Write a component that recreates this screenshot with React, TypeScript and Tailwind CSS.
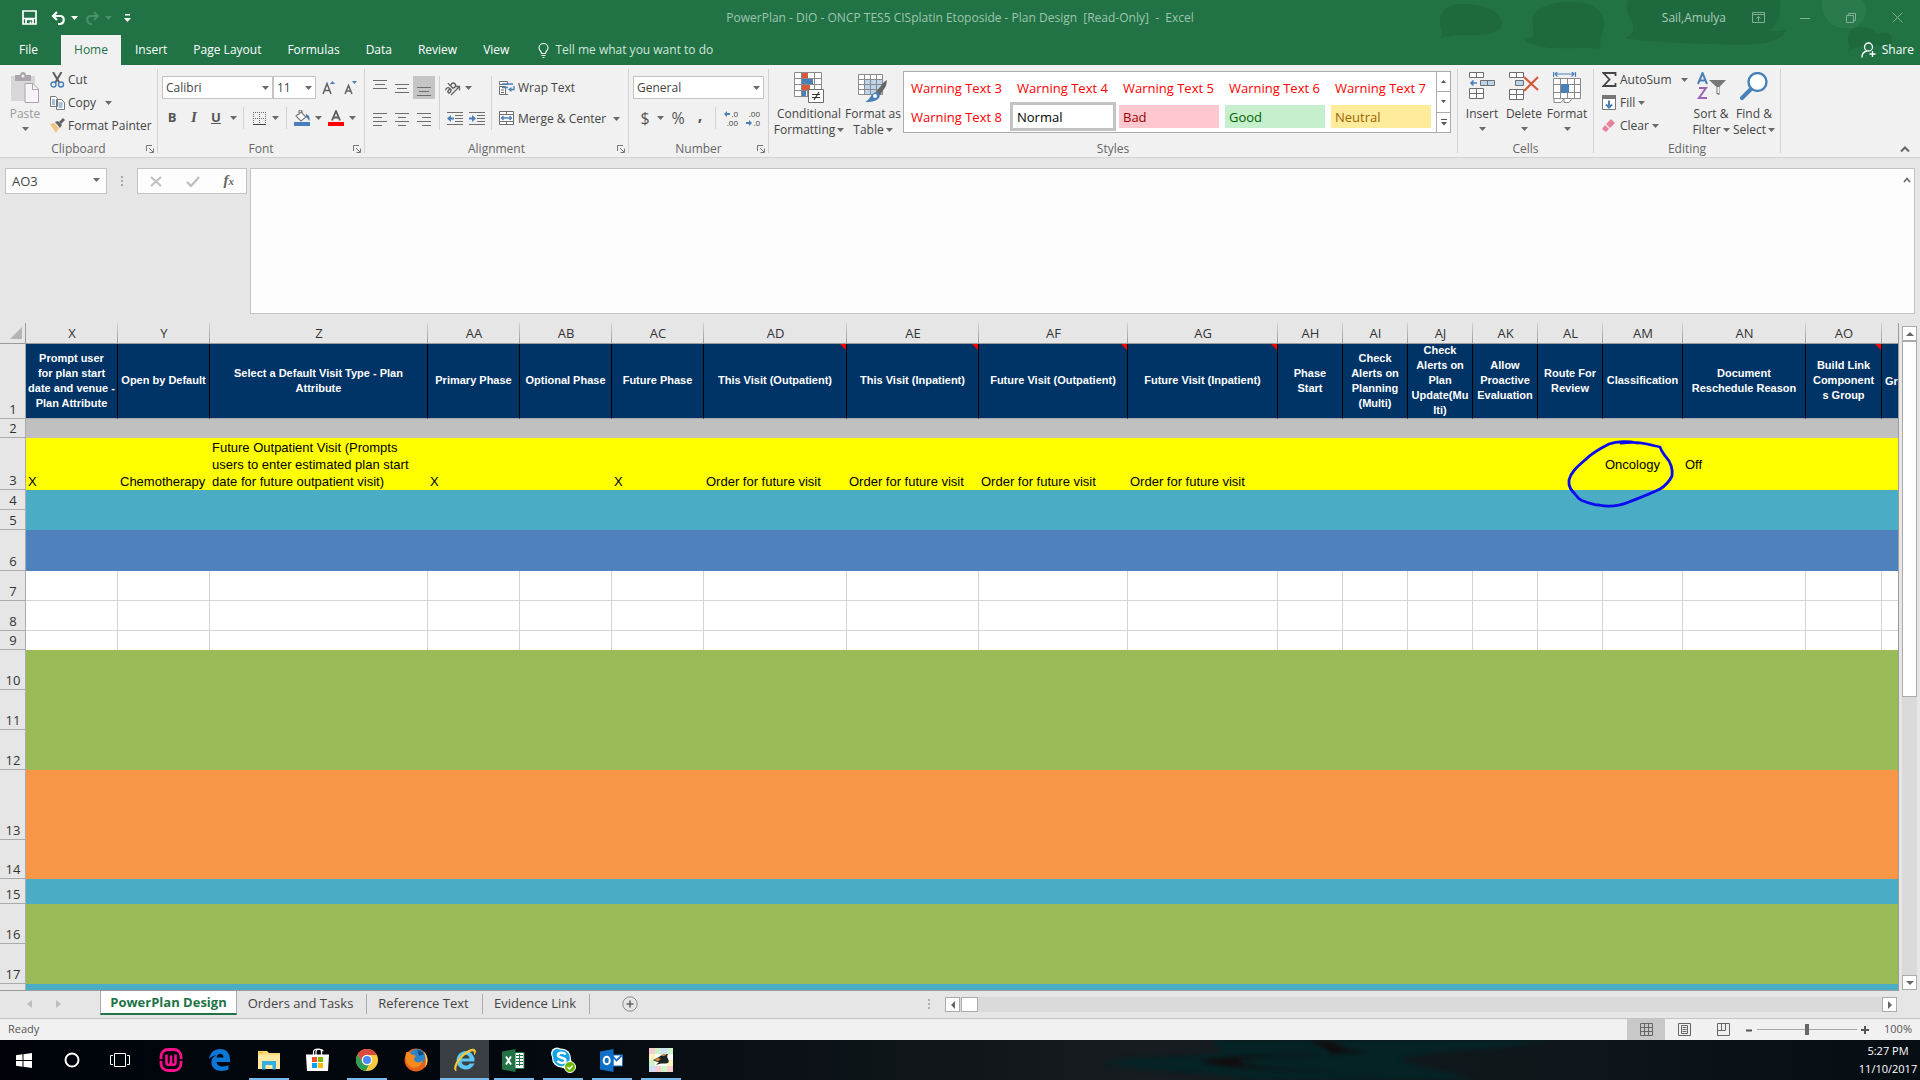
import type { ReactNode } from "react";

const GRAY = "#6e6e6e";
const BLUE = "#4a80b8";

function Caret({ className = "text-[#6a6a6a]" }: { className?: string }) {
  return (
    <svg width="7" height="4" viewBox="0 0 7 4" className={`shrink-0 ${className}`} aria-hidden="true">
      <path d="M0 0h7L3.5 4z" fill="currentColor" />
    </svg>
  );
}

/* ---------- title bar ---------- */

function TitleArt() {
  return (
    <svg className="pointer-events-none absolute right-0 top-0" width="500" height="54" viewBox="0 0 500 54" aria-hidden="true">
      <g fill="#1f693f">
        <path d="M20 22C20 8 32 3 46 4c18 1 34 6 36 18 1 10-12 12-22 13-14 1-26-2-40 4 5-6 0-10 0-17z" />
        <path d="M112 20c2-14 22-19 44-18 18 1 28 10 28 22 0 10-6 14-3 25-20-3-44 2-62-3-12-2-14-6-15-8 12 2 10-4 8-18z" />
        <path d="M208 0h152c2 20-6 26-10 31 6 1 12-1 16-1-4 12-24 15-44 15-30-1-90-2-117-7 10-4 10-12 5-20-4-7-4-12-2-18z" />
        <path d="M428 38c0-8 8-12 16-11 8 1 10 5 14 7 4-2 12-3 14 4 2 8-6 8-14 8-12-2-22 0-30 6 2-6 0-8 0-14z" />
      </g>
      <path d="M402 0h40c8 8 4 22-8 28-18 2-34-6-32-28z" fill="#2a7a4d" />
    </svg>
  );
}

function TitleBar() {
  return (
    <header className="relative z-10 flex h-[35px] shrink-0 items-center bg-[#217346] text-xs">
      <TitleArt />
      <div className="flex items-center pl-[22px]">
        <button aria-label="Save" className="mr-[14px]">
          <svg width="15" height="15" viewBox="0 0 15 15"><path d="M1 1h13v13H1zM1 8.500h13M4 14v-4.500h7V14M8.500 11.500v2" fill="none" stroke="#fff" strokeWidth="1.700" /></svg>
        </button>
        <button aria-label="Undo" className="flex items-center gap-[5px] text-white">
          <svg width="15" height="14" viewBox="0 0 15 14"><path d="M6 1 2 5l4 4M2 5h7c5 0 5 7 0 8H7" fill="none" stroke="#fff" strokeWidth="2.200" /></svg>
          <Caret className="text-white" />
        </button>
        <button aria-label="Redo" className="ml-[7px] flex items-center gap-[5px]">
          <svg width="15" height="14" viewBox="0 0 15 14"><path d="m9 1 4 4-4 4M13 5H6C1 5 1 12 6 13h1" fill="none" stroke="#4d8f6b" strokeWidth="2" /></svg>
          <Caret className="text-[#4d8f6b]" />
        </button>
        <button aria-label="Customize Quick Access Toolbar" className="ml-[12px]">
          <svg width="7" height="8" viewBox="0 0 7 8"><path d="M1 0h5v1.500H1zM0 4h7L3.500 8z" fill="#fff" /></svg>
        </button>
      </div>
      <h1 className="pointer-events-none absolute inset-x-0 text-center whitespace-pre text-[#9fc5ae]">PowerPlan - DIO - ONCP TES5 CISplatin Etoposide - Plan Design  [Read-Only]  -  Excel</h1>
      <div className="relative ml-auto flex items-center pr-[17px] text-[#a9ccb7]">
        <span className="mr-[26px]">Sail,Amulya</span>
        <button aria-label="Ribbon Display Options" className="mr-[35px]">
          <svg width="13" height="11" viewBox="0 0 13 11"><path d="M.5.5h12v10H.5zM.5 2.500h12M6.500 9.500v-5M4.500 6.500l2-2 2 2" fill="none" stroke="#7fb096" /></svg>
        </button>
        <button aria-label="Minimize" className="mr-[36px]">
          <svg width="10" height="10" viewBox="0 0 10 10"><path d="M0 5.500h10" stroke="#7fb096" /></svg>
        </button>
        <button aria-label="Restore" className="mr-[36px]">
          <svg width="10" height="10" viewBox="0 0 10 10"><path d="M.5 2.500h7v7h-7zM2.500 2.500v-2h7v7h-2" fill="none" stroke="#7fb096" /></svg>
        </button>
        <button aria-label="Close">
          <svg width="11" height="11" viewBox="0 0 11 11"><path d="m.5.5 10 10m0-10-10 10" stroke="#7fb096" /></svg>
        </button>
      </div>
    </header>
  );
}

const TABS = ["Insert", "Page Layout", "Formulas", "Data", "Review", "View"];

function RibbonTabs() {
  return (
    <nav className="flex h-[30px] shrink-0 items-stretch bg-[#217346] text-xs text-white">
      <button className="w-[61px] pr-1">File</button>
      <button className="w-[60px] bg-[#f1f1f1] text-[#217346]">Home</button>
      <div className="flex pl-px">
        {TABS.map((t) => (
          <button key={t} className="px-[13px]">{t}</button>
        ))}
      </div>
      <button className="ml-[16px] flex items-center gap-[6px] text-[#d3e5da]">
        <svg width="11" height="15" viewBox="0 0 11 15"><path d="M3.500 10.500C3.500 8 1 7.500 1 5a4.500 4.500 0 0 1 9 0c0 2.500-2.500 3-2.500 5.500zM3.500 12.500h4M4.500 14.500h2" fill="none" stroke="#e3efe8" strokeWidth="1.200" /></svg>
        Tell me what you want to do
      </button>
      <button className="z-20 ml-auto flex items-center gap-[6px] pr-[6px]">
        <svg width="15" height="16" viewBox="0 0 15 16"><circle cx="7.500" cy="5" r="4" fill="none" stroke="#fff" strokeWidth="1.300" /><path d="M1 15.500c0-4 2-6 5-6.500M11.500 9v6M8.500 12h6" fill="none" stroke="#fff" strokeWidth="1.300" /></svg>
        Share
      </button>
    </nav>
  );
}

/* ---------- ribbon ---------- */

function Group({ label, width, launcher, children }: { label: string; width: string; launcher?: boolean; children: ReactNode }) {
  return (
    <section aria-label={label} className={`flex shrink-0 ${width}`}>
      <div className="flex min-w-0 flex-1 flex-col">
        <div className="flex h-[76px] items-start">{children}</div>
        <div className="relative flex h-4 items-center justify-center text-[#666]">
          {label}
          {launcher && (
            <button aria-label={`${label} settings`} className="absolute right-[3px]">
              <svg width="8" height="8" viewBox="0 0 8 8"><path d="M.5 6V.5H6M3 3l4 4M7.500 3.500v4h-4" fill="none" stroke="#777" /></svg>
            </button>
          )}
        </div>
      </div>
      <div className="mt-1 h-[84px] w-px bg-[#d2d2d2]" />
    </section>
  );
}

function Big({ icon, lines, width, caret = "below" }: { icon: ReactNode; lines: string[]; width: string; caret?: "below" | "inline" }) {
  return (
    <button className={`flex shrink-0 flex-col items-center pt-[7px] leading-4 ${width}`}>
      <span className="flex h-[34px] items-start">{icon}</span>
      {lines.map((l, i) => (
        <span key={l} className="flex items-center gap-[2px] whitespace-nowrap">
          {l}
          {caret === "inline" && i === lines.length - 1 && <Caret />}
        </span>
      ))}
      {caret === "below" && <Caret className="mt-[5px] text-[#6a6a6a]" />}
    </button>
  );
}

function Small({ icon, label, caret }: { icon: ReactNode; label: string; caret?: string }) {
  return (
    <button className="flex h-[23px] items-center gap-[3px] whitespace-nowrap">
      {icon}
      <span>{label}</span>
      {caret && <span className={caret}><Caret /></span>}
    </button>
  );
}

function Lines({ rows, label, active }: { rows: [number, number, number][]; label: string; active?: boolean }) {
  return (
    <button aria-label={label} aria-pressed={active} className={`flex h-[23px] w-[22px] items-center justify-center ${active ? "bg-[#c5c5c5]" : ""}`}>
      <svg width="14" height="17" viewBox="0 0 14 17">
        {rows.map(([x1, x2, y]) => <path key={y} d={`M${x1} ${y}.5H${x2}`} stroke={GRAY} />)}
      </svg>
    </button>
  );
}

function Sep({ tall = "h-[22px]" }: { tall?: string }) {
  return <div className={`w-px bg-[#d2d2d2] ${tall}`} />;
}

function Combo({ label, value, width }: { label: string; value: string; width: string }) {
  return (
    <div className={`relative h-[23px] ${width}`}>
      <select aria-label={label} defaultValue={value} className="h-full w-full appearance-none border border-[#c3c3c3] bg-white pl-[3px] text-xs text-[#444] outline-none">
        <option>{value}</option>
      </select>
      <span className="pointer-events-none absolute right-[4px] top-[10px]"><Caret /></span>
    </div>
  );
}

function Clipboard() {
  return (
    <Group label="Clipboard" width="w-[158px]" launcher>
      <div className="w-[50px] text-[#9c9c9c]">
        <Big
          width="w-[50px]"
          lines={["Paste"]}
          icon={
            <svg width="30" height="32" viewBox="0 0 30 32"><path d="M1 4h24v25H1z" fill="#d9d5da" /><path d="M5 3h5c0-4 6-4 6 0h5v6H5z" fill="#aaa6ab" /><circle cx="13" cy="4" r="1.500" fill="#f1f1f1" /><path d="M15 11.500h8l5.500 5.500v13.500H15z" fill="#f8f3f8" stroke="#a9a5aa" /><path d="M22.500 12v5.500H28" fill="none" stroke="#a9a5aa" /></svg>
          }
        />
      </div>
      <div className="flex flex-col pt-[3px]">
        <Small label="Cut" icon={<svg width="15" height="16" viewBox="0 0 15 16"><path d="m3 0 6.500 11M11.500 0 5 11" stroke="#606060" strokeWidth="2" /><circle cx="3.500" cy="12.500" r="2.500" fill="none" stroke={BLUE} strokeWidth="1.400" /><circle cx="11" cy="12.500" r="2.500" fill="none" stroke={BLUE} strokeWidth="1.400" /></svg>} />
        <Small label="Copy" caret="ml-[6px]" icon={<svg width="15" height="14" viewBox="0 0 15 14"><path d="M.5.5h5l2 2v8h-7zM6.500 3.500h5l3 3v7h-8z" fill="#fff" stroke="#777" /><path d="M2 4h3M2 6h3M2 8h3M8.500 7h4M8.500 9h4M8.500 11h4" stroke={BLUE} /></svg>} />
        <Small label="Format Painter" icon={<svg width="15" height="15" viewBox="0 0 15 15"><path d="m0 6 4-1 5 5-3 5z" fill="#f0c47c" /><path d="m5 4 3-1 4 4-2 3z" fill="#606060" /><path d="m9 4 4-4 2 2-4 4z" fill="#606060" /></svg>} />
      </div>
    </Group>
  );
}

function FontGroup() {
  return (
    <Group label="Font" width="w-[207px]" launcher>
      <div className="flex flex-col pl-[4px] pt-[11px]">
        <div className="flex items-center">
          <Combo label="Font name" value="Calibri" width="w-[111px]" />
          <Combo label="Font size" value="11" width="w-[43px]" />
          <button aria-label="Increase font size" className="ml-[6px]">
            <svg width="14" height="16" viewBox="0 0 14 16"><path d="m1 14 4-10.500L9 14M2.500 10.500h5" fill="none" stroke="#606060" strokeWidth="1.500" /><path d="M8 4h5l-2.500-3z" fill={BLUE} /></svg>
          </button>
          <button aria-label="Decrease font size" className="ml-[8px]">
            <svg width="14" height="16" viewBox="0 0 14 16"><path d="m1 14 3.500-8.500L8 14M2.300 11h4.400" fill="none" stroke="#606060" strokeWidth="1.500" /><path d="M8 1h5l-2.500 3z" fill={BLUE} /></svg>
          </button>
        </div>
        <div className="mt-[8px] flex h-[22px] items-center text-[13px] text-[#555]">
          <button className="w-[20px] font-bold">B</button>
          <button className="w-[24px] font-['Liberation_Serif'] text-[15px] font-bold italic">I</button>
          <button className="w-[20px] font-bold underline">U</button>
          <button aria-label="Underline style" className="flex w-[14px] justify-center"><Caret /></button>
          <span className="ml-[3px]"><Sep /></span>
          <button aria-label="Borders" className="ml-[9px] flex items-center gap-[6px]">
            <svg width="13" height="13" viewBox="0 0 13 13"><path d="M0 .5h13M0 6.500h13M.5 0v13M6.500 0v13M12.500 0v13" stroke={GRAY} strokeDasharray="1 1" /><path d="M0 12.500h13" stroke="#444" /></svg>
            <Caret />
          </button>
          <span className="ml-[7px]"><Sep /></span>
          <button aria-label="Fill color" className="ml-[7px] flex items-center gap-[5px]">
            <svg width="16" height="16" viewBox="0 0 16 16"><path d="M0 12h16v4H0z" fill="#4a7ebb" /><path d="m2 6 5-4 5 5-5 4zM5 5V1c1-1.500 3-1 3 0v2" fill="#fff" stroke="#777" strokeWidth="1.100" /><path d="M12 4c3 1 4 3 3.500 7-1.500-1-1.500-3-3.500-4z" fill={BLUE} /></svg>
            <Caret />
          </button>
          <button aria-label="Font color" className="ml-[6px] flex items-center gap-[5px]">
            <svg width="16" height="16" viewBox="0 0 16 16"><path d="M0 12h16v4H0z" fill="#f00" /><path d="M4 10.500 8 1l4 9.500M5.500 7.500h5" fill="none" stroke="#606060" strokeWidth="1.900" /></svg>
            <Caret />
          </button>
        </div>
      </div>
    </Group>
  );
}

function AlignmentGroup() {
  const indent = (label: string, d: string) => (
    <button aria-label={label} className="flex w-[22px] justify-center">
      <svg width="17" height="13" viewBox="0 0 17 13"><path d="M0 .5h16M8 3.500h8M8 6.500h8M8 9.500h8M0 12.500h16" stroke={GRAY} /><path d={d} fill={BLUE} /></svg>
    </button>
  );
  return (
    <Group label="Alignment" width="w-[264px]" launcher>
      <div className="flex pl-[4px] pt-[11px]">
        <div>
          <div className="flex">
            <Lines label="Top align" rows={[[0, 14, 1], [2, 12, 5], [0, 14, 9]]} />
            <Lines label="Middle align" rows={[[0, 14, 5], [2, 12, 9], [0, 14, 13]]} />
            <Lines label="Bottom align" active rows={[[0, 14, 8], [2, 12, 12], [0, 14, 16]]} />
          </div>
          <div className="mt-[8px] flex">
            <Lines label="Align left" rows={[[0, 14, 3], [0, 9, 7], [0, 14, 11], [0, 9, 15]]} />
            <Lines label="Center" rows={[[0, 14, 3], [3, 11, 7], [0, 14, 11], [3, 11, 15]]} />
            <Lines label="Align right" rows={[[0, 14, 3], [5, 14, 7], [0, 14, 11], [5, 14, 15]]} />
          </div>
        </div>
        <div className="ml-[4px]"><Sep tall="h-[54px]" /></div>
        <div className="w-[51px] pl-[4px]">
          <button aria-label="Orientation" className="flex h-[23px] items-center gap-[3px]">
            <svg width="18" height="17" viewBox="0 0 18 17"><g fill="none" stroke="#5a5a5a" strokeWidth="1.300" transform="rotate(-45 7 8)"><path d="M1 6.500c1-1 4-1 4 1V11M5 8.500c-2 0-4 0-4 1.500s3 1.500 4 0M7.500 3v8M7.500 8c0-2.500 4.500-2.500 4.500.5s-4.500 3-4.500.5" /></g><path d="m7 16 8-8M11.500 7.500h4V11.500" fill="none" stroke="#666" strokeWidth="1.300" /></svg>
            <Caret />
          </button>
          <div className="mt-[8px] flex h-[22px] items-center">
            {indent("Decrease indent", "M0 6.500 4 3v2.500h3v2H4V10z")}
            {indent("Increase indent", "M7 6.500 3 3v2.500H0v2h3V10z")}
          </div>
        </div>
        <Sep tall="h-[54px]" />
        <div className="pl-[7px]">
          <Small label="Wrap Text" icon={<svg width="16" height="16" viewBox="0 0 16 16"><path d="M.5 1.500h8v3h-8zM.5 6.500h6v8h-6z" fill="#fff" stroke={GRAY} /><path d="M2 10h3M2 12.500h3M6.500 14.500H9" stroke={GRAY} /><path d="M3 4h11M3 7.500h6M15 6v3.500h-3" fill="none" stroke={BLUE} strokeWidth="1.300" /><path d="M9 9.500 12.500 7v5z" fill={BLUE} /></svg>} />
          <div className="mt-[8px]">
            <Small label="Merge & Center" caret="ml-[4px]" icon={<svg width="16" height="15" viewBox="0 0 16 15"><path d="M.5.5h14v13H.5zM.5 3.500h14M.5 10.500h14M7.500.5v3M7.500 10.500v3" fill="#fff" stroke={GRAY} /><path d="M2 7h11M4.500 5 2.500 7l2 2M10.500 5l2 2-2 2" fill="none" stroke={BLUE} strokeWidth="1.300" /></svg>} />
          </div>
        </div>
      </div>
    </Group>
  );
}

function DecimalIcon({ label, top, bottom, arrow }: { label: string; top: string; bottom: string; arrow: "up" | "down" }) {
  const a = <svg width="6" height="6" viewBox="0 0 6 6">{arrow === "up" ? <path d="M0 3 3 0v2h3v2H3v2z" fill={BLUE} /> : <path d="M6 3 3 0v2H0v2h3v2z" fill={BLUE} />}</svg>;
  return (
    <button aria-label={label} className="flex w-[16px] flex-col items-end text-[8px] leading-[9px] text-[#444]">
      <span className="flex items-center gap-px">{arrow === "up" && a}{top}</span>
      <span className="flex items-center gap-px">{arrow === "down" && a}{bottom}</span>
    </button>
  );
}

function NumberGroup() {
  return (
    <Group label="Number" width="w-[140px]" launcher>
      <div className="flex flex-col pl-[4px] pt-[11px]">
        <Combo label="Number format" value="General" width="w-[131px]" />
        <div className="mt-[8px] flex h-[22px] items-center text-base text-[#555]">
          <button className="w-[24px]">$</button>
          <Caret />
          <button className="ml-[6px] w-[16px]">%</button>
          <button className="ml-[8px] w-[12px] pb-[6px] font-bold">,</button>
          <span className="ml-[9px]"><Sep /></span>
          <div className="flex gap-[6px] pl-[6px]">
            <DecimalIcon label="Increase decimal" top=".0" bottom=".00" arrow="up" />
            <DecimalIcon label="Decrease decimal" top=".00" bottom=".0" arrow="down" />
          </div>
        </div>
      </div>
    </Group>
  );
}

const STYLES: [string, string][] = [
  ["Warning Text 3", "text-[#ff0000] border-transparent"],
  ["Warning Text 4", "text-[#ff0000] border-transparent"],
  ["Warning Text 5", "text-[#ff0000] border-transparent"],
  ["Warning Text 6", "text-[#ff0000] border-transparent"],
  ["Warning Text 7", "text-[#ff0000] border-transparent"],
  ["Warning Text 8", "text-[#ff0000] border-transparent"],
  ["Normal", "text-black border-[#c3c3c3]"],
  ["Bad", "text-[#9c0006] bg-[#ffc7ce] border-white"],
  ["Good", "text-[#006100] bg-[#c6efce] border-white"],
  ["Neutral", "text-[#9c6500] bg-[#ffeb9c] border-white"],
];

function StylesGroup() {
  return (
    <Group label="Styles" width="w-[689px]">
      <div className="pl-[4px]">
        <Big width="w-[72px]" caret="inline" lines={["Conditional", "Formatting"]} icon={
          <svg width="30" height="31" viewBox="0 0 30 31"><path d="M.5.5h27v24H.5zM.5 6.500h27M.5 12.500h27M.5 18.500h27M7.500.5v24M13.500.5v24M20.500.5v24" fill="#fff" stroke="#8a8a8a" /><path d="M8 1h6v5H8zM8 13h8v5H8z" fill="#d9593b" /><path d="M8 7h11v5H8zM8 19h4v5H8z" fill={BLUE} /><path d="M14.500 17.500h15v13h-15z" fill="#fff" stroke={GRAY} /><path d="M18 22.500h8M18 25.500h8M25 20l-5 8" stroke="#333" strokeWidth="1.200" /></svg>
        } />
      </div>
      <Big width="w-[56px]" caret="inline" lines={["Format as", "Table"]} icon={
        <svg width="30" height="31" viewBox="0 0 30 31"><path d="M.5 2.500h24v20H.5z" fill="#fff" /><path d="M7 8h18v15H7z" fill="#bdd3ea" /><path d="M.5 2.500h24v20H.5zM.5 7.500h24M.5 12.500h24M.5 17.500h24M6.500 2.500v20M12.500 2.500v20M18.500 2.500v20" fill="none" stroke="#8a8a8a" /><path d="m29 8-3 2-8 10 4 3 6-9z" fill="#666" /><path d="M18 20c3 0 5 3 3 6-3 4-9 4-14 4 5-2 6-9 11-10z" fill={BLUE} /><circle cx="17" cy="24" r="2" fill="#fff" /></svg>
      } />
      <div className="ml-[2px] mt-[6px] flex h-[62px] border border-[#ababab] bg-white">
        <div className="grid grid-cols-5 content-start pr-[2px] pt-px">
          {STYLES.map(([name, cls]) => (
            <button key={name} className={`h-[29px] w-[106px] border-[3px] px-[4px] text-left text-[13px] leading-[20px] whitespace-nowrap ${cls}`}>{name}</button>
          ))}
        </div>
        <div className="flex w-[14px] flex-col border-l border-[#ababab]">
          <button aria-label="Previous styles" className="flex flex-1 items-center justify-center border-b border-[#ababab]"><svg width="5" height="3" viewBox="0 0 5 3"><path d="M0 3h5L2.500 0z" fill="#555" /></svg></button>
          <button aria-label="Next styles" className="flex flex-1 items-center justify-center border-b border-[#ababab]"><svg width="5" height="3" viewBox="0 0 5 3"><path d="M0 0h5L2.500 3z" fill="#555" /></svg></button>
          <button aria-label="More styles" className="flex flex-1 items-center justify-center"><svg width="6" height="7" viewBox="0 0 6 7"><path d="M0 0h6v1H0zM0 3h6L3 6.500z" fill="#555" /></svg></button>
        </div>
      </div>
    </Group>
  );
}

function CellsGroup() {
  return (
    <Group label="Cells" width="w-[136px]">
      <div className="flex pl-[3px]">
        <Big width="w-[42px]" lines={["Insert"]} icon={<svg width="27" height="28" viewBox="0 0 27 28"><path d="M.5.5h14v5H.5zM7.500.5v5M.5 16.500h14v10H.5zM.5 21.500h14M7.500 16.500v10" fill="#fff" stroke={GRAY} /><path d="M11.500 8.500h14v5h-14zM18.500 8.500v5" fill="#bdd3ea" stroke={GRAY} /><path d="M8 11H2M4.500 8.500 2 11l2.500 2.500" fill="none" stroke={BLUE} strokeWidth="1.600" /></svg>} />
        <Big width="w-[42px]" lines={["Delete"]} icon={<svg width="30" height="28" viewBox="0 0 30 28"><path d="M.5.5h14v5H.5zM7.500.5v5M.5 17.500h14v10H.5zM.5 22.500h14M7.500 17.500v10" fill="#fff" stroke={GRAY} /><path d="M6.500 8.500h8v5h-8z" fill="#bdd3ea" stroke={GRAY} /><path d="m15 5 14 13M29 5 15 19" stroke="#d9593b" strokeWidth="2.200" /></svg>} />
        <Big width="w-[44px]" lines={["Format"]} icon={<svg width="28" height="32" viewBox="0 0 28 32"><path d="M.5-1v6M22.500-1v6M2 2h19M4.500-.5 2 2l2.500 2.500M18.500-.5 21 2l-2.500 2.500" fill="none" stroke={BLUE} strokeWidth="1.200" /><path d="M.5 6.500h27v20H.5zM.5 12.500h27M.5 20.500h27M7.500 6.500v20M14.500 6.500v20M21.500 6.500v20M1 26.500v4h7l3-4v4h5l3-4" fill="#fff" stroke="#8a8a8a" /><path d="M8 12h8v9H8z" fill={BLUE} /></svg>} />
      </div>
    </Group>
  );
}

function EditingGroup() {
  return (
    <Group label="Editing" width="w-[187px]">
      <div className="flex w-[96px] flex-col items-start pl-[8px] pt-[3px]">
        <Small label="AutoSum" caret="ml-[6px]" icon={<svg width="15" height="15" viewBox="0 0 15 15"><path d="M13.500 4V1H1.500l6 6.500-6 6.500h12v-3" fill="none" stroke="#444" strokeWidth="1.800" /></svg>} />
        <Small label="Fill" caret="ml-0" icon={<svg width="15" height="15" viewBox="0 0 15 15"><path d="M.5 1h13v13.500H.5z" fill="#fff" stroke="#777" /><path d="M0 0h14v4H0z" fill="#777" /><path d="M7 5.500v7M4 9.500l3 3 3-3" fill="none" stroke={BLUE} strokeWidth="2" /></svg>} />
        <Small label="Clear" caret="ml-0" icon={<svg width="15" height="13" viewBox="0 0 15 13"><path d="M9 0 13 4 8 9 4 5zM3 6l4 4-2.500 2.500H3L0 10z" fill="#e8829a" /></svg>} />
      </div>
      <Big width="w-[42px]" caret="inline" lines={["Sort &", "Filter"]} icon={
        <svg width="29" height="29" viewBox="0 0 29 29"><path d="M1 12 5.500 1 10 12M2.500 8.500h6" fill="none" stroke={BLUE} strokeWidth="2" /><path d="M2 16h7L2 26h8" fill="none" stroke="#9a63b8" strokeWidth="2" /><path d="M12 8h17l-6.500 7v8l-3-1v-7z" fill="#777" /><path d="M20.500 15h1.500v6h-1.500z" fill="#fff" /></svg>
      } />
      <Big width="w-[44px]" caret="inline" lines={["Find &", "Select"]} icon={
        <svg width="28" height="29" viewBox="0 0 28 29"><path d="m2 26 9-9" stroke={BLUE} strokeWidth="4" strokeLinecap="round" /><circle cx="17.500" cy="10" r="9" fill="#fff" stroke={BLUE} strokeWidth="2.400" /></svg>
      } />
    </Group>
  );
}

function Ribbon() {
  return (
    <div className="relative flex h-[93px] shrink-0 overflow-hidden border-b border-[#d2d2d2] bg-[#f1f1f1] text-xs text-[#444]">
      <Clipboard />
      <FontGroup />
      <AlignmentGroup />
      <NumberGroup />
      <StylesGroup />
      <CellsGroup />
      <EditingGroup />
      <button aria-label="Collapse the Ribbon" className="mr-[10px] ml-auto self-end pb-[5px]">
        <svg width="10" height="6" viewBox="0 0 10 6"><path d="m1 5.500 4-4 4 4" fill="none" stroke="#666" strokeWidth="2" /></svg>
      </button>
    </div>
  );
}

function FormulaBar() {
  return (
    <div className="flex h-[165px] shrink-0 items-start bg-[#e6e6e6] pl-[5px] pr-[5px] pt-[10px] text-[#444]">
      <div className="relative h-[26px] w-[102px]">
        <input aria-label="Name Box" defaultValue="AO3" className="h-full w-full border border-[#c3c3c3] bg-[#fdfdfd] pl-[6px] text-[13px] outline-none" />
        <span className="pointer-events-none absolute right-[7px] top-[10px]"><Caret /></span>
      </div>
      <svg width="30" height="26" viewBox="0 0 30 26" aria-hidden="true"><path d="M14 8h2v2h-2zM14 12h2v2h-2zM14 16h2v2h-2z" fill="#a8a8a8" /></svg>
      <div className="flex h-[26px] w-[110px] items-center justify-between border border-[#c3c3c3] bg-[#fdfdfd] pl-[12px] pr-[12px]">
        <button aria-label="Cancel"><svg width="12" height="11" viewBox="0 0 12 11"><path d="m1 1 10 9M11 1 1 10" stroke="#c0c0c0" strokeWidth="2" /></svg></button>
        <button aria-label="Enter"><svg width="14" height="11" viewBox="0 0 14 11"><path d="m1 6 4 4 8-9" fill="none" stroke="#c0c0c0" strokeWidth="2.400" /></svg></button>
        <button aria-label="Insert Function" className="pb-[2px] font-['Liberation_Serif'] text-[15px] font-bold italic leading-none text-[#666]">f<span className="text-[11px]">x</span></button>
      </div>
      <div className="relative ml-[3px] h-[146px] flex-1">
        <textarea aria-label="Formula Bar" className="block h-full w-full resize-none border border-[#c3c3c3] bg-[#fdfdfd] outline-none" />
        <svg className="absolute right-[4px] top-[9px]" width="8" height="6" viewBox="0 0 8 6"><path d="m1 5 3-3.500L7 5" fill="none" stroke="#666" strokeWidth="1.600" /></svg>
      </div>
    </div>
  );
}

/* ---------- worksheet ---------- */

type Col = { id: string; w: string; head: string; row3?: string; note?: boolean };

const COLS: Col[] = [
  { id: "X", w: "w-[92px]", head: "Prompt user\nfor plan start\ndate and venue -\nPlan Attribute", row3: "X" },
  { id: "Y", w: "w-[92px]", head: "Open by Default", row3: "Chemotherapy" },
  { id: "Z", w: "w-[218px]", head: "Select a Default Visit Type - Plan\nAttribute", row3: "Future Outpatient Visit (Prompts\nusers to enter estimated plan start\ndate for future outpatient visit)" },
  { id: "AA", w: "w-[92px]", head: "Primary Phase", row3: "X" },
  { id: "AB", w: "w-[92px]", head: "Optional Phase" },
  { id: "AC", w: "w-[92px]", head: "Future Phase", row3: "X" },
  { id: "AD", w: "w-[143px]", head: "This Visit (Outpatient)", row3: "Order for future visit", note: true },
  { id: "AE", w: "w-[132px]", head: "This Visit (Inpatient)", row3: "Order for future visit", note: true },
  { id: "AF", w: "w-[149px]", head: "Future Visit (Outpatient)", row3: "Order for future visit", note: true },
  { id: "AG", w: "w-[150px]", head: "Future Visit (Inpatient)", row3: "Order for future visit", note: true },
  { id: "AH", w: "w-[65px]", head: "Phase\nStart" },
  { id: "AI", w: "w-[65px]", head: "Check\nAlerts on\nPlanning\n(Multi)" },
  { id: "AJ", w: "w-[65px]", head: "Check\nAlerts on\nPlan\nUpdate(Mu\nlti)" },
  { id: "AK", w: "w-[65px]", head: "Allow\nProactive\nEvaluation" },
  { id: "AL", w: "w-[65px]", head: "Route For\nReview" },
  { id: "AM", w: "w-[80px]", head: "Classification", row3: "Oncology" },
  { id: "AN", w: "w-[123px]", head: "Document\nReschedule Reason", row3: "Off" },
  { id: "AO", w: "w-[76px]", head: "Build Link\nComponent\ns Group", note: true },
];

const FILL_ROWS: { n: number; h: string; bg: string; grid?: boolean }[] = [
  { n: 4, h: "h-[20px]", bg: "bg-[#4bacc6]" },
  { n: 5, h: "h-[20px]", bg: "bg-[#4bacc6]" },
  { n: 6, h: "h-[41px]", bg: "bg-[#4f81bd]" },
  { n: 7, h: "h-[30px]", bg: "bg-white", grid: true },
  { n: 8, h: "h-[30px]", bg: "bg-white", grid: true },
  { n: 9, h: "h-[19px]", bg: "bg-white", grid: true },
  { n: 10, h: "h-[40px]", bg: "bg-[#9bbb59]" },
  { n: 11, h: "h-[40px]", bg: "bg-[#9bbb59]" },
  { n: 12, h: "h-[40px]", bg: "bg-[#9bbb59]" },
  { n: 13, h: "h-[70px]", bg: "bg-[#f79646]" },
  { n: 14, h: "h-[39px]", bg: "bg-[#f79646]" },
  { n: 15, h: "h-[25px]", bg: "bg-[#4bacc6]" },
  { n: 16, h: "h-[40px]", bg: "bg-[#9bbb59]" },
  { n: 17, h: "h-[40px]", bg: "bg-[#9bbb59]" },
];

function RowHead({ n }: { n: number | string }) {
  return (
    <th scope="row" className="border-b border-r border-[#ababab] bg-[#e6e6e6] p-0 pl-px align-bottom font-['Open_Sans',sans-serif] text-[13px] font-normal leading-[17px] text-[#333]">{n}</th>
  );
}

function InkCircle() {
  return (
    <svg className="pointer-events-none absolute -left-[40px] top-0 z-10" width="120" height="72" viewBox="0 0 120 72" aria-hidden="true">
      <path d="M74 5C66 3 54 3 46 6 36 11 28 16 22 22c-8 7-14 12-16 20-1 7 3 11 6 14 2 3 4 5 6 6 5 2 12 5 18 5 8 2 20 1 30-3 10-4 21-8 31-13 5-3 9-7 12-13 1-6-1-14-6-19-3-4-5-6-6-10C93 8 88 7 84 6c-8-2-16-2-26-1" fill="none" stroke="#0a0af0" strokeWidth="2.800" strokeLinecap="round" strokeLinejoin="round" />
    </svg>
  );
}

function Sheet() {
  return (
    <div className="min-w-0 flex-1 overflow-hidden border-b border-r border-[#9b9b9b] bg-[#e6e6e6]">
      <table className="w-full table-fixed border-separate border-spacing-0">
        <thead>
          <tr className="h-[21px]">
            <th className="w-[26px] border-b border-r border-[#9b9b9b] p-0">
              <svg className="ml-auto mr-[3px]" width="12" height="12" viewBox="0 0 12 12" aria-label="Select all"><path d="M12 0v12H0z" fill="#b4b4b4" /></svg>
            </th>
            {COLS.map((c) => (
              <th key={c.id} scope="col" className={`border-b border-[#9b9b9b] bg-[linear-gradient(to_bottom,#d0d0d0,#9b9b9b)] bg-[length:1px_100%] bg-right bg-no-repeat p-0 text-[13px] font-normal leading-[18px] text-[#333] ${c.w}`}>{c.id}</th>
            ))}
            <th className="border-b border-[#9b9b9b] p-0" />
          </tr>
        </thead>
        <tbody>
          <tr className="h-[75px] font-['Liberation_Sans','Arial',sans-serif]">
            <RowHead n={1} />
            {COLS.map((c) => (
              <td key={c.id} className="relative border-b border-r border-b-[#ababab] border-r-black bg-[#003366] p-0 pb-px text-center text-[11px] font-bold leading-[15px] text-white">
                <div className="flex h-[73px] items-center justify-center overflow-hidden whitespace-pre">{c.head}</div>
                {c.note && <svg className="absolute right-0 top-0" width="6" height="6" viewBox="0 0 6 6"><path d="M0 0h6v6z" fill="#f00" /></svg>}
              </td>
            ))}
            <td className="overflow-hidden border-b border-[#ababab] bg-[#003366] p-0 pl-[3px] text-[11px] font-bold leading-[15px] whitespace-nowrap text-white">Group</td>
          </tr>
          <tr className="h-[19px]">
            <RowHead n={2} />
            <td colSpan={COLS.length + 1} className="bg-[#c0c0c0] p-0" />
          </tr>
          <tr className="h-[52px] font-['Liberation_Sans','Arial',sans-serif] text-[13px] leading-[17px] text-black">
            <RowHead n={3} />
            {COLS.map((c) => (
              <td key={c.id} className={`relative bg-[#ffff00] p-0 pl-[2px] whitespace-pre ${c.id === "AM" || c.id === "AN" ? "align-middle" : "align-bottom"}`}>
                {c.row3}
                {c.id === "AM" && <InkCircle />}
              </td>
            ))}
            <td className="bg-[#ffff00] p-0" />
          </tr>
          {FILL_ROWS.map((r) => (
            <tr key={r.n} className={r.h}>
              <RowHead n={r.n} />
              {r.grid ? (
                [...COLS.map((c) => c.id), "AP"].map((id) => <td key={id} className={`border-[#d4d4d4] bg-white p-0 ${id === "AP" ? "" : "border-r"} ${r.n === 9 ? "" : "border-b"}`} />)
              ) : (
                <td colSpan={COLS.length + 1} className={`p-0 ${r.bg}`} />
              )}
            </tr>
          ))}
          <tr className="h-[20px]">
            <RowHead n="" />
            <td colSpan={COLS.length + 1} className="bg-[#4bacc6] p-0" />
          </tr>
        </tbody>
      </table>
    </div>
  );
}

function Arrow({ d, label, className }: { d: string; label: string; className: string }) {
  return (
    <button aria-label={label} className={`flex shrink-0 items-center justify-center border border-[#ababab] bg-white ${className}`}>
      <svg width="8" height="8" viewBox="0 0 8 8"><path d={d} fill="#666" /></svg>
    </button>
  );
}

function SheetArea() {
  return (
    <main className="flex min-h-0 flex-1 bg-[#e6e6e6]">
      <Sheet />
      <div className="mb-px mt-[3px] ml-[3px] mr-[3px] flex w-[15px] shrink-0 flex-col bg-[#dadada]">
        <Arrow label="Scroll up" d="M0 6h8L4 2z" className="h-[15px]" />
        <div className="h-[356px] border border-[#ababab] bg-white" />
        <Arrow label="Scroll down" d="M0 2h8L4 6z" className="mt-auto h-[15px]" />
      </div>
    </main>
  );
}

function SheetTabs() {
  return (
    <div className="flex h-[27px] shrink-0 items-start bg-[#e6e6e6] text-[13px] text-[#444]">
      <div className="flex h-[26px] w-[100px] items-center pl-[27px]">
        <button aria-label="Previous sheet" className="mr-[24px]"><svg width="5" height="8" viewBox="0 0 5 8"><path d="M5 0v8L0 4z" fill="#bcbcbc" /></svg></button>
        <button aria-label="Next sheet"><svg width="5" height="8" viewBox="0 0 5 8"><path d="M0 0v8l5-4z" fill="#bcbcbc" /></svg></button>
      </div>
      <button className="h-[24px] w-[137px] border-x border-b-2 border-x-[#ababab] border-b-[#217346] bg-white pt-[2px] font-bold text-[#217346]">PowerPlan Design</button>
      <div className="flex h-[26px] items-center">
        <button className="w-[129px] pr-[2px]">Orders and Tasks</button>
        <div className="h-5 w-px bg-[#ababab]" />
        <button className="w-[115px] pr-[2px]">Reference Text</button>
        <div className="h-5 w-px bg-[#ababab]" />
        <button className="w-[106px] pr-[2px]">Evidence Link</button>
        <div className="h-5 w-px bg-[#ababab]" />
      </div>
      <button aria-label="New sheet" className="ml-[32px] mt-[5px]">
        <svg width="16" height="16" viewBox="0 0 16 16"><circle cx="8" cy="8" r="7.200" fill="none" stroke="#8a8a8a" /><path d="M8 4.500v7M4.500 8h7" stroke="#666" strokeWidth="1.600" /></svg>
      </button>
      <div className="ml-auto flex w-[992px] items-center pt-[6px] pr-[23px]">
        <svg width="2" height="11" viewBox="0 0 2 11" aria-hidden="true"><path d="M0 0h2v2H0zM0 4h2v2H0zM0 8h2v2H0z" fill="#b0b0b0" /></svg>
        <div className="ml-[15px] flex h-[15px] flex-1 bg-[#dadada]">
          <Arrow label="Scroll left" d="M6 0v8L2 4z" className="w-[15px]" />
          <div className="ml-px w-[17px] border border-[#ababab] bg-white" />
          <Arrow label="Scroll right" d="M2 0v8l4-4z" className="ml-auto w-[15px]" />
        </div>
      </div>
    </div>
  );
}

function StatusBar() {
  return (
    <footer className="flex h-[22px] shrink-0 items-center border-t border-[#c3c3c3] bg-[#f1f1f1] pl-[8px] pr-[8px] text-[11px] text-[#555]">
      <span>Ready</span>
      <div className="ml-auto flex h-full items-center">
        <button aria-label="Normal view" className="flex h-full w-[38px] items-center justify-center bg-[#c8c8c8]">
          <svg width="13" height="13" viewBox="0 0 13 13"><path d="M.5.5h12v12H.5zM.5 4.500h12M.5 8.500h12M4.500.5v12M8.500.5v12" fill="none" stroke="#666" /></svg>
        </button>
        <button aria-label="Page layout view" className="flex h-full w-[39px] items-center justify-center">
          <svg width="13" height="13" viewBox="0 0 13 13"><path d="M.5.5h12v12H.5zM3.500 2.500h6v8h-6zM4.500 4.500h4M4.500 6.500h4M4.500 8.500h4" fill="none" stroke="#666" /></svg>
        </button>
        <button aria-label="Page break preview" className="flex h-full w-[38px] items-center justify-center">
          <svg width="13" height="13" viewBox="0 0 13 13"><path d="M.5.5h12v12H.5zM4.500.5v7M.5 7.500h8M8.500.5v7" fill="none" stroke="#666" /></svg>
        </button>
        <button aria-label="Zoom out" className="ml-[3px]"><svg width="8" height="8" viewBox="0 0 8 8"><path d="M1 4.500h6" stroke="#555" strokeWidth="2" /></svg></button>
        <input type="range" aria-label="Zoom" min="10" max="190" defaultValue="100" className="mx-[4px] h-[14px] w-[100px] appearance-none bg-[linear-gradient(#a8a8a8,#a8a8a8)] bg-[length:100%_1px] bg-center bg-no-repeat [&::-webkit-slider-thumb]:h-[11px] [&::-webkit-slider-thumb]:w-[4px] [&::-webkit-slider-thumb]:appearance-none [&::-webkit-slider-thumb]:bg-[#666]" />
        <button aria-label="Zoom in"><svg width="8" height="8" viewBox="0 0 8 8"><path d="M0 4h8M4 0v8" stroke="#555" strokeWidth="2" /></svg></button>
        <span className="w-[43px] text-right">100%</span>
      </div>
    </footer>
  );
}

/* ---------- taskbar ---------- */

function Task({ label, line, active, narrow, children }: { label: string; line?: boolean; active?: boolean; narrow?: boolean; children: ReactNode }) {
  return (
    <button aria-label={label} className={`flex h-[40px] shrink-0 flex-col items-center ${narrow ? "w-[48px]" : "w-[49px]"} ${active ? "bg-[#3a3f43]" : ""}`}>
      <span className="flex h-[38px] items-center pt-[2px]">{children}</span>
      {line && <span className={`h-[2px] bg-[#76b9ed] ${active ? "w-full" : "w-[40px]"}`} />}
    </button>
  );
}

function Taskbar() {
  return (
    <div className="relative flex h-[40px] shrink-0 overflow-hidden bg-[linear-gradient(to_right,#00040a,#02080d_25%,#0d1418_45%,#161c1f_60%,#0f171b_80%,#060d13)]">
      <svg className="pointer-events-none absolute right-[300px] top-0 blur-[2px]" width="580" height="40" viewBox="0 0 580 40" aria-hidden="true">
        <path d="M170 0h340c-40 10-90 8-150 18 20 12 60 14 70 22H210c-40-8-120-8-147-18 40-7 110-6 120-10z" fill="#052224" />
        <path d="M270 0c50 4 10 8 60 12-80 4-150 4-170 9 20 9 130 8 180 19-40-10-150-12-140-19 10-6 100-4 90-10z" fill="#120c0e" />
      </svg>
      <Task label="Start" narrow>
        <svg width="16" height="15" viewBox="0 0 16 15"><path d="M0 2.200 6.500 1.300V7H0zM7.500 1.200 16 0v7H7.500zM0 8h6.500v5.700L0 12.800zM7.500 8H16v7l-8.500-1.200z" fill="#fff" /></svg>
      </Task>
      <Task label="Search" narrow>
        <svg width="16" height="16" viewBox="0 0 16 16"><circle cx="8" cy="8" r="6.500" fill="none" stroke="#fff" strokeWidth="2" /></svg>
      </Task>
      <Task label="Task View" narrow>
        <svg width="20" height="14" viewBox="0 0 20 14"><path d="M4.500.5h11v13h-11zM3 2.500H.5v9H3M17 2.500h2.500v9H17" fill="none" stroke="#fff" /></svg>
      </Task>
      <span className="w-[2px]" />
      <Task label="Wamp">
        <svg width="24" height="24" viewBox="0 0 24 24"><rect x="2" y="1.500" width="20" height="21" rx="7" fill="none" stroke="#f5108c" strokeWidth="2.800" /><path d="M0 12h5M19 12h5" stroke="#00060c" strokeWidth="1.500" /><path d="M7.500 6.500V14c0 2 .8 3 2.200 3s2.300-1 2.300-3V7.500V14c0 2 .8 3 2.200 3s2.300-1 2.300-3V6.500" fill="none" stroke="#f5108c" strokeWidth="2.600" /></svg>
      </Task>
      <Task label="Edge">
        <svg width="22" height="22" viewBox="0 0 22 22"><path d="M0 10C1 4 5 0 11 0c7 0 10 5 10 10v3H7.500c.5 5 8 5.500 12 3v4.500c-7 3-16 1.500-17-6C2 10 4.500 7.500 8 6 5 6.500 2 7.500 0 10zm7.500-1.500h7c0-5-6-5-7 0z" fill="#0a78d7" /></svg>
      </Task>
      <Task label="File Explorer" line>
        <svg width="22" height="19" viewBox="0 0 22 19"><path d="M0 0h9l2 2h11v16H0z" fill="#fbd97a" /><path d="M0 4h22v14H0z" fill="#ffe9a2" /><path d="M1.500 1.500h3" stroke="#f4a300" /><path d="M4 10h14v8.500h-3.500V14h-7v4.500H4z" fill="#37aee2" /></svg>
      </Task>
      <Task label="Store">
        <svg width="23" height="24" viewBox="0 0 23 24"><path d="M7.500 8V4c0-4 8-4 8 0v4M10 7V3.500c0-3 7-3 7 0" fill="none" stroke="#fff" strokeWidth="1.200" /><path d="M0 6.500h23L22 23H1z" fill="#fff" /><path d="M6 9h5v5H6z" fill="#f25022" /><path d="M12 9h5v5h-5z" fill="#7fba00" /><path d="M6 15h5v5H6z" fill="#00a4ef" /><path d="M12 15h5v5h-5z" fill="#ffb900" /></svg>
      </Task>
      <Task label="Chrome" line>
        <svg width="22" height="22" viewBox="0 0 22 22"><circle cx="11" cy="11" r="11" fill="#fbcb3d" /><path d="M1.500 5.500A11 11 0 0 1 20.800 6H11a5 5 0 0 0-4.600 7z" fill="#d94b3c" /><path d="M1.500 5.500 6.600 13.500A5 5 0 0 0 13 15.600L9.700 22A11 11 0 0 1 1.500 5.500z" fill="#2e9e57" /><circle cx="11" cy="11" r="5.200" fill="#fff" /><circle cx="11" cy="11" r="4" fill="#4a8af4" /></svg>
      </Task>
      <Task label="Firefox">
        <svg width="24" height="24" viewBox="0 0 22 22"><circle cx="11" cy="11" r="10.500" fill="#e8611a" /><circle cx="12" cy="8.500" r="7.500" fill="#2b84c9" /><path d="M2 4c2-1 4 0 5 2l4 1-2 3c1 4 6 4 8 1 0 4-3 7-8 7-5-1-9-5-7-14z" fill="#f58a1f" /><path d="M18 3c4 4 5 11 1 15 2-5 1-10-1-15z" fill="#fcd04b" /><path d="M12 2c3 0 5 1 6 4l-4 1z" fill="#164a86" /></svg>
      </Task>
      <Task label="Internet Explorer" line active>
        <svg width="24" height="24" viewBox="0 0 24 24"><path d="M12.500 3a9.300 9.300 0 0 1 9 10.500H8.500c.5 5 7 5 8 2h5A9.300 9.300 0 1 1 12.500 3zm-4 7.500h8c-.5-5-7-5-8 0z" fill="#5cc7f2" /><path d="M3 23C-2 19 8 5 18 1.500c5-1.500 5 2 3.500 5C22 3 20 2 17 3.500 9 7 1 18 3 23z" fill="#f7c934" stroke="#f7c934" /></svg>
      </Task>
      <Task label="Excel" line>
        <svg width="23" height="23" viewBox="0 0 23 23"><path d="M12 3.500h10v16H12z" fill="#fff" stroke="#217346" /><path d="M14 6.500h7M14 9.500h7M14 12.500h7M14 15.500h7M17.500 5v12" stroke="#217346" /><path d="M0 2.500 13.500 0v23L0 20.500z" fill="#217346" /><path d="m4 7.500 5 8M9 7.500l-5 8" stroke="#fff" strokeWidth="1.900" /></svg>
      </Task>
      <Task label="Skype" line>
        <svg width="26" height="26" viewBox="0 0 26 26"><circle cx="11.500" cy="11" r="9.500" fill="#fff" /><circle cx="7" cy="6.500" r="6" fill="#fff" /><circle cx="15" cy="15" r="6.500" fill="#fff" /><circle cx="11.500" cy="11" r="8.300" fill="#14a5e8" /><circle cx="7.300" cy="7" r="5" fill="#14a5e8" /><path d="M15.500 7.500C14 5 8 5 8 8.200c0 3.300 7.500 1.800 7.500 5.300 0 3.200-6.500 3.200-8 .3" fill="none" stroke="#fff" strokeWidth="2.400" /><circle cx="20" cy="20" r="5.500" fill="#6bb700" stroke="#fff" /><path d="m17.500 20 2 2 3-3.500" fill="none" stroke="#fff" strokeWidth="1.400" /></svg>
      </Task>
      <Task label="Outlook" line>
        <svg width="23" height="23" viewBox="0 0 23 23"><path d="M13 6h9.500v11H13z" fill="#fff" stroke="#0f6fc6" /><path d="m13 7.500 3.500 4L22.500 6" fill="none" stroke="#0f6fc6" strokeWidth="1.700" /><path d="M0 2.500 13.500 0v23L0 20.500z" fill="#0f6fc6" /><ellipse cx="6.700" cy="11.500" rx="3" ry="3.800" fill="none" stroke="#fff" strokeWidth="2" /></svg>
      </Task>
      <Task label="Image viewer" line>
        <svg width="24" height="24" viewBox="0 0 24 24"><path d="M0 0h24v24H0z" fill="#fff" /><path d="M0 0h6v6H0zM12 6h6v6h-6zM18 18h6v6h-6zM6 18h6v6H6z" fill="#f9cccf" /><path d="M6 0h6v6H6zM18 0h6v6h-6zM0 12h6v6H0zM12 18h6v6h-6z" fill="#cdf3c9" /><path d="M0 6h6v6H0zM18 12h6v6h-6z" fill="#fdf3bd" /><path d="M12 0h6v6h-6zM0 18h6v6H0z" fill="#cfe0fb" /><path d="M4 12c2-1 4-2 6-3 2-2 5-3 9-3-1 2-1 3 0 5 1 1 1 3 0 4-3 1-6 0-9 1l-3 1 3-3c-2 0-4-1-6-2z" fill="#1c2320" /><path d="m5 12 4-2 3 1-3 2zM12 7.500l4-1.500 2 .5-3 1.500z" fill="#e0922e" /></svg>
      </Task>
      <div className="relative ml-auto flex w-[64px] flex-col items-center justify-center text-[11px] leading-[18px] text-white">
        <span>5:27 PM</span>
        <span>11/10/2017</span>
      </div>
    </div>
  );
}

export default function App() {
  return (
    <div className="flex h-screen flex-col overflow-hidden bg-[#e6e6e6] font-['Open_Sans','Noto_Sans',sans-serif]">
      <TitleBar />
      <RibbonTabs />
      <Ribbon />
      <FormulaBar />
      <SheetArea />
      <SheetTabs />
      <StatusBar />
      <Taskbar />
    </div>
  );
}
